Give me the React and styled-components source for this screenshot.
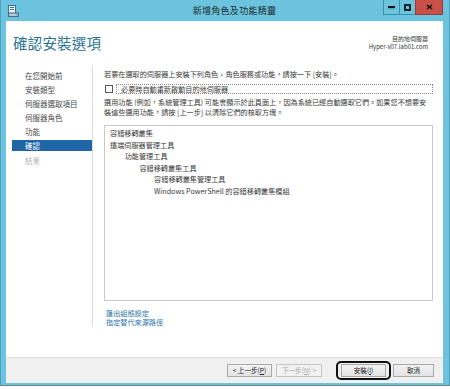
import React from 'react'
import styled, { createGlobalStyle } from 'styled-components'

const GlobalStyle = createGlobalStyle`
  html, body {
    margin: 0;
    padding: 0;
    background: #ffffff;
  }
  body {
    font-family: "Noto Sans CJK TC", "Noto Sans", "Liberation Sans", sans-serif;
    color: #333;
  }
`

const Window = styled.div`
  width: 450px;
  height: 386px;
  box-sizing: border-box;
  background: #6bc3dd;
  border-left: 1px solid #4f9fc0;
  border-right: 1px solid #4f9fc0;
  border-bottom: 1px solid #6a7f88;
  display: flex;
  flex-direction: column;
`

const TitleBar = styled.div`
  height: 21px;
  display: flex;
  align-items: flex-start;
  flex-shrink: 0;
`

const AppIcon = styled.svg`
  margin: 5px 0 0 7px;
  width: 11px;
  height: 12px;
`

const TitleText = styled.div`
  flex: 1;
  text-align: center;
  padding-left: 66px;
  font-size: 9px;
  line-height: 21px;
  color: #1c2a30;
  letter-spacing: 0.3px;
`

const Controls = styled.div`
  display: flex;
  margin-right: 6px;
`

const CtrlButton = styled.div`
  width: ${(p) => p.w}px;
  height: 15px;
  box-sizing: border-box;
  background: ${(p) => (p.danger ? '#c75149' : '#6bc3dd')};
  border: 1px solid ${(p) => (p.danger ? '#9a3a34' : '#3a8fb0')};
  border-top: none;
  margin-left: -1px;
  display: flex;
  align-items: center;
  justify-content: center;
`

const Client = styled.div`
  flex: 1;
  margin: 0 6px 2px 5px;
  background: #fff;
  display: flex;
  flex-direction: column;
`

const Header = styled.div`
  height: 44px;
  box-sizing: border-box;
  padding: 13px 15px 0 7px;
  display: flex;
  justify-content: space-between;
  align-items: flex-start;
`

const PageTitle = styled.div`
  font-size: 14.5px;
  line-height: 18px;
  color: #2a7393;
  letter-spacing: 0.2px;
`

const Target = styled.div`
  margin-top: 1px;
  text-align: right;
  font-size: 6px;
  line-height: 8px;
  color: #333;
`

const Body = styled.div`
  height: 262px;
  display: flex;
`

const Nav = styled.div`
  width: 87px;
  box-sizing: border-box;
  padding: 5px 0 0 6px;
  border-right: 1px solid #dcdcdc;
  display: flex;
  flex-direction: column;
  gap: 3.1px;
`

const NavItem = styled.div`
  width: 80px;
  height: 11px;
  line-height: 11px;
  box-sizing: border-box;
  padding-left: 13px;
  font-size: 7.5px;
  color: ${(p) => (p.active ? '#fff' : p.disabled ? '#b4b4b4' : '#4a4a4a')};
  background: ${(p) => (p.active ? '#1f66a6' : 'transparent')};
`

const Content = styled.div`
  flex: 1;
  padding: 4px 10px 0 11px;
  display: flex;
  flex-direction: column;
  font-size: 7.15px;
  color: #3a3a3a;
`

const Line = styled.div`
  line-height: ${(p) => p.lh || 10}px;
  white-space: nowrap;
`

const CheckRow = styled.div`
  margin-top: 5px;
  display: flex;
  align-items: center;
  height: 10px;
`

const CheckBox = styled.span`
  width: 8px;
  height: 8px;
  box-sizing: border-box;
  border: 1px solid #5a5a5a;
  background: #fff;
  margin: 0 3px 0 1px;
  flex-shrink: 0;
`

const FocusLabel = styled.span`
  flex: 1;
  height: 10px;
  box-sizing: border-box;
  border: 1px dotted #8a8a8a;
  padding-left: 4px;
  line-height: 8px;
  white-space: nowrap;
`

const Paragraph = styled.div`
  margin-top: 4px;
`

const ListBox = styled.div`
  margin-top: 8px;
  height: 177px;
  box-sizing: border-box;
  border: 1px solid #c9c9c9;
  padding: 2px 0 0 5px;
`

const ListItem = styled.div`
  line-height: 11.6px;
  padding-left: ${(p) => p.level * 14.7}px;
  color: #3a3a3a;
  white-space: nowrap;
`

const Links = styled.div`
  margin-top: 8px;
  padding-left: 2px;
`

const LinkText = styled.a`
  display: block;
  line-height: 9px;
  color: #2a74a8;
  text-decoration: none;
`

const Spacer = styled.div`
  height: 30px;
`

const Footer = styled.div`
  height: 26px;
  box-sizing: border-box;
  background: #f0f0f0;
  border-top: 1px solid #dcdcdc;
  display: flex;
  align-items: center;
  justify-content: flex-end;
  padding: 0 9px 0 0;
`

const Button = styled.div`
  width: ${(p) => p.w}px;
  height: 13px;
  box-sizing: border-box;
  border: 1px solid ${(p) => (p.disabled ? '#c6c6c6' : '#a9a9a9')};
  background: ${(p) => (p.disabled ? '#f2f2f2' : 'linear-gradient(#f2f2f2, #e4e4e4)')};
  color: ${(p) => (p.disabled ? '#a8a8a8' : '#222')};
  font-size: 6.6px;
  line-height: 11px;
  text-align: center;
  white-space: nowrap;
  margin-left: ${(p) => p.ml || 0}px;
  u {
    text-decoration: underline;
  }
`

const Highlight = styled.div`
  margin-left: 14px;
  width: 55px;
  height: 19px;
  box-sizing: border-box;
  border: 2px solid #111;
  border-radius: 5px;
  display: flex;
  align-items: center;
  justify-content: center;
`

const WindowIcon = () => (
  <AppIcon viewBox="0 0 11 12">
    <rect x="0.5" y="0.5" width="7" height="8" fill="#e8f4fa" stroke="#3b6f96" />
    <rect x="2" y="2" width="4" height="1" fill="#3b6f96" />
    <rect x="2" y="4" width="4" height="1" fill="#3b6f96" />
    <rect x="0.5" y="8" width="10" height="3.5" fill="#9bb3c4" stroke="#4b6e86" />
    <rect x="2" y="9.5" width="6" height="0.8" fill="#e6eef3" />
  </AppIcon>
)

const navItems = [
  { label: '在您開始前' },
  { label: '安裝類型' },
  { label: '伺服器選取項目' },
  { label: '伺服器角色' },
  { label: '功能' },
  { label: '確認', active: true },
  { label: '結果', disabled: true },
]

const features = [
  { label: '容錯移轉叢集', level: 0 },
  { label: '遠端伺服器管理工具', level: 0 },
  { label: '功能管理工具', level: 1 },
  { label: '容錯移轉叢集工具', level: 2 },
  { label: '容錯移轉叢集管理工具', level: 3 },
  { label: 'Windows PowerShell 的容錯移轉叢集模組', level: 3 },
]

const App = () => {
  return (
    <>
      <GlobalStyle />
      <Window>
        <TitleBar>
          <WindowIcon />
          <TitleText>新增角色及功能精靈</TitleText>
          <Controls>
            <CtrlButton w={17}>
              <svg width="7" height="3"><rect width="7" height="2.2" fill="#111" /></svg>
            </CtrlButton>
            <CtrlButton w={17}>
              <svg width="7" height="7"><rect x="1" y="1" width="5" height="5" fill="none" stroke="#111" strokeWidth="1.8" /></svg>
            </CtrlButton>
            <CtrlButton w={28} danger>
              <svg width="7" height="6"><path d="M1 1 L6 5 M6 1 L1 5" stroke="#111" strokeWidth="1.6" /></svg>
            </CtrlButton>
          </Controls>
        </TitleBar>

        <Client>
          <Header>
            <PageTitle>確認安裝選項</PageTitle>
            <Target>
              <div>目的地伺服器</div>
              <div>Hyper-v07.lab01.com</div>
            </Target>
          </Header>

          <Body>
            <Nav>
              {navItems.map((item) => (
                <NavItem key={item.label} active={item.active} disabled={item.disabled}>
                  {item.label}
                </NavItem>
              ))}
            </Nav>

            <Content>
              <Line>若要在選取的伺服器上安裝下列角色、角色服務或功能，請按一下 [安裝]。</Line>
              <CheckRow>
                <CheckBox />
                <FocusLabel>必要時自動重新啟動目的地伺服器</FocusLabel>
              </CheckRow>
              <Paragraph>
                <Line lh={9.5}>選用功能 (例如，系統管理工具) 可能會顯示於此頁面上，因為系統已經自動選取它們。如果您不想要安</Line>
                <Line lh={9.5}>裝這些選用功能，請按 [上一步] 以清除它們的核取方塊。</Line>
              </Paragraph>
              <ListBox>
                {features.map((f) => (
                  <ListItem key={f.label} level={f.level}>{f.label}</ListItem>
                ))}
              </ListBox>
              <Links>
                <LinkText href="#">匯出組態設定</LinkText>
                <LinkText href="#">指定替代來源路徑</LinkText>
              </Links>
            </Content>
          </Body>

          <Spacer />

          <Footer>
            <Button w={45}>&lt; 上一步(<u>P</u>)</Button>
            <Button w={46} ml={4} disabled>下一步(<u>N</u>) &gt;</Button>
            <Highlight>
              <Button w={45}>安裝(<u>I</u>)</Button>
            </Highlight>
            <Button w={41} ml={2}>取消</Button>
          </Footer>
        </Client>
      </Window>
    </>
  )
}

export default App
